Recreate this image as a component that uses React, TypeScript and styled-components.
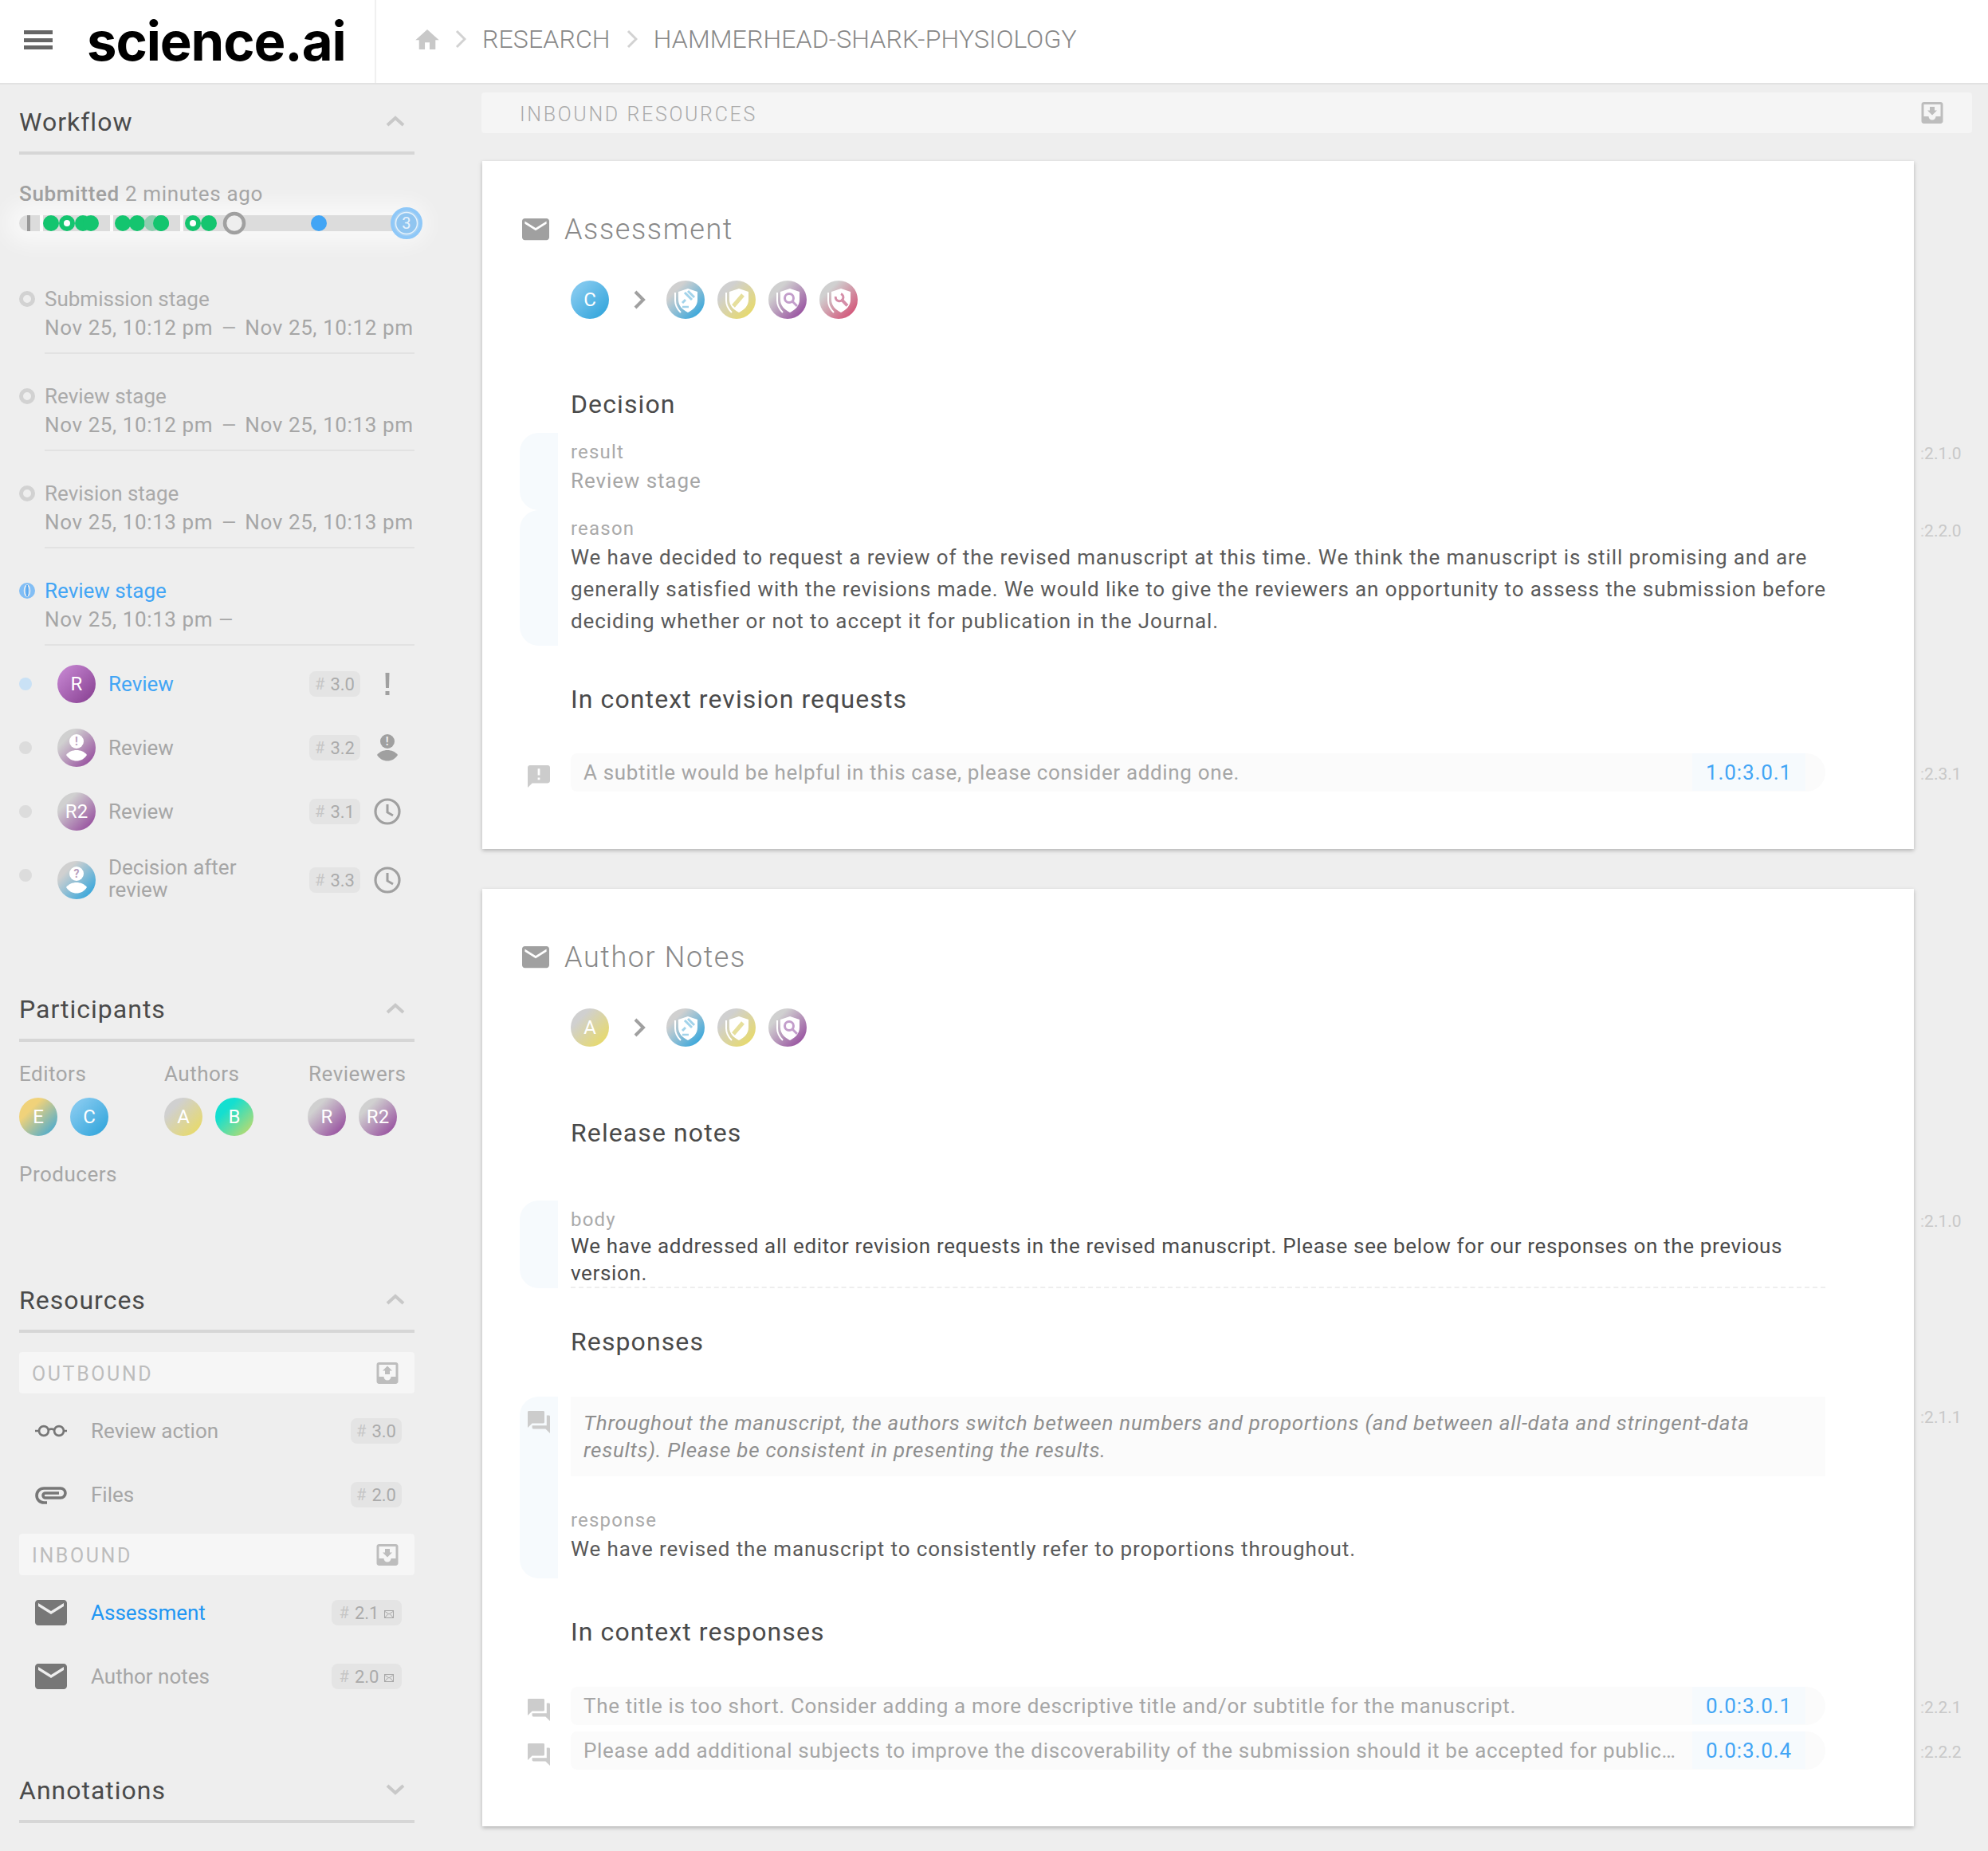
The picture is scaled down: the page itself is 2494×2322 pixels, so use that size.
import React from 'react';
import styled, { createGlobalStyle } from 'styled-components';

const GlobalStyle = createGlobalStyle`
  html, body {
    margin: 0;
    padding: 0;
    background: #eee;
    font-family: Roboto, "Liberation Sans", sans-serif;
  }
  * {
    box-sizing: border-box;
  }
`;

const gradients = {
  reviewActive: 'linear-gradient(135deg, #c080cc 15%, #8c4596 90%)',
  review: 'linear-gradient(135deg, #d0d0d0 25%, #974f9f 90%)',
  decision: 'linear-gradient(135deg, #d0d0d0 25%, #34a6dc 90%)',
  editor: 'linear-gradient(135deg, #f0d27a 30%, #3fa8d6 95%)',
  coEditor: 'linear-gradient(135deg, #7fc7ee 20%, #34a6dc 90%)',
  author: 'linear-gradient(135deg, #d0d0d0 25%, #e8da68 90%)',
  coAuthor: 'linear-gradient(135deg, #14dfd0 30%, #c5da68 95%)',
  producer: 'linear-gradient(135deg, #d0d0d0 25%, #d4486f 95%)',
};

function Chevron({ dir = 'up' }: { dir?: 'up' | 'down' }) {
  return (
    <ChevronSvg viewBox="0 0 24 14" width="24" height="14">
      <polyline points={dir === 'up' ? '2,12 12,3 22,12' : '2,2 12,11 22,2'} fill="none" stroke="#c8c8c8" strokeWidth="4" />
    </ChevronSvg>
  );
}

function Crumb() {
  return (
    <svg viewBox="0 0 14 24" width="14" height="24">
      <polyline points="2,2 12,12 2,22" fill="none" stroke="#d2d2d2" strokeWidth="3" />
    </svg>
  );
}

function Mail({ size = 40, color = '#777' }: { size?: number; color?: string }) {
  return (
    <svg viewBox="2 4 20 16" width={size} height={size * 0.8}>
      <path fill={color} d="M20 4H4c-1.1 0-2 .9-2 2v12c0 1.1.9 2 2 2h16c1.1 0 2-.9 2-2V6c0-1.1-.9-2-2-2zm0 4l-8 5-8-5V6l8 5 8-5v2z" />
    </svg>
  );
}

function TrayIcon({ out }: { out?: boolean }) {
  const arrow = out ? 'M8 10h2v3h4v-3h2l-4-4-4 4z' : 'M16 10h-2V7h-4v3H8l4 4 4-4z';
  return (
    <svg viewBox="3 3 18 18" width="28" height="27">
      <path fill="#bdbdbd" d={`M19 3H4.99c-1.11 0-1.98.89-1.98 2L3 19c0 1.1.88 2 1.99 2H19c1.1 0 2-.9 2-2V5c0-1.11-.9-2-2-2zm0 12h-4c0 1.66-1.35 3-3 3s-3-1.34-3-3H4.99V5H19v10z${arrow}`} />
    </svg>
  );
}

function Note({ kind }: { kind: 'alert' | 'answer' }) {
  const d =
    kind === 'alert'
      ? 'M20 2H4c-1.1 0-1.99.9-1.99 2L2 22l4-4h14c1.1 0 2-.9 2-2V4c0-1.1-.9-2-2-2zm-7 9h-2V5h2v6zm0 4h-2v-2h2v2z'
      : 'M21 6h-2v9H6v2c0 .55.45 1 1 1h11l4 4V7c0-.55-.45-1-1-1zm-4 6V3c0-.55-.45-1-1-1H3c-.55 0-1 .45-1 1v14l4-4h10c.55 0 1-.45 1-1z';
  return (
    <NoteSvg viewBox="2 2 20 20" width="28" height="28">
      <path fill="#cccccc" d={d} />
    </NoteSvg>
  );
}

function Person({ mark, color, width, height }: { mark: string; color: string; width: number; height: number }) {
  const markColor = color === '#fff' ? '#b9a0bd' : '#eee';
  return (
    <svg viewBox="0 0 28 34" width={width} height={height}>
      <circle cx="14" cy="9" r="9" fill={color} />
      <text x="14" y="14" textAnchor="middle" fontSize="14" fontWeight="700" fill={markColor} fontFamily="Roboto, sans-serif">
        {mark}
      </text>
      <path d="M1 26C7 18 21 18 27 26 21 36 7 36 1 26z" fill={color} />
    </svg>
  );
}

function Clock() {
  return (
    <svg viewBox="0 0 34 34" width="34" height="34">
      <circle cx="17" cy="17" r="15" fill="none" stroke="#a0a0a0" strokeWidth="3.2" />
      <polyline points="17,8 17,18 24,22" fill="none" stroke="#a0a0a0" strokeWidth="3" />
    </svg>
  );
}

function Bang() {
  return (
    <svg viewBox="0 0 8 28" width="8" height="28">
      <path d="M1.5 0h5L6 19H2z" fill="#a0a0a0" />
      <rect x="1.5" y="23" width="5" height="5" fill="#a0a0a0" />
    </svg>
  );
}

function Glasses() {
  return (
    <svg viewBox="0 0 44 16" width="44" height="16">
      <g fill="none" stroke="#777" strokeWidth="3">
        <circle cx="12" cy="8" r="6.5" />
        <circle cx="33" cy="8" r="6.5" />
        <path d="M18.5 6.500c2-1.500 6-1.500 8 0M0 8h5M39 8h5" />
      </g>
    </svg>
  );
}

function Clip() {
  return (
    <svg viewBox="0 0 40 24" width="40" height="24">
      <path d="M15 22H11a9 9 0 0 1 0-18H32a6 6 0 0 1 0 12H13a3 3 0 0 1 0-6H30" fill="none" stroke="#777" strokeWidth="3.6" />
    </svg>
  );
}

function StageDot({ active }: { active?: boolean }) {
  if (!active) return <RingDot />;
  return (
    <StageSvg viewBox="0 0 20 20" width="20" height="20">
      <circle cx="10" cy="10" r="10" fill="#82bef5" />
      <ellipse cx="10" cy="10" rx="3.500" ry="7" fill="none" stroke="#eee" strokeWidth="1.500" />
      <rect x="9" y="3" width="2" height="14" fill="#5aa8ef" />
    </StageSvg>
  );
}

function Timeline() {
  const green = '#14c56f';
  return (
    <TimelineWrap>
      <TimelineSvg viewBox="0 0 496 20" width="496" height="20">
        <path d="M10 0H26V20H10a10 10 0 0 1 0-20z" fill="#dcdcdc" />
        <rect x="30" width="84" height="20" fill="#dcdcdc" />
        <rect x="118" width="84" height="20" fill="#dcdcdc" />
        <rect x="206" width="270" height="20" fill="#dcdcdc" />
        <rect x="10" width="4" height="20" fill="#999" />
        {[40, 60, 80, 90, 130, 148, 178, 218, 238].map((cx) => (
          <circle key={cx} cx={cx} cy="10" r="10" fill={green} />
        ))}
        <circle cx="167" cy="10" r="10" fill="#8fceb0" />
        <circle cx="178" cy="10" r="10" fill={green} />
        <circle cx="60" cy="10" r="4" fill="#fff" />
        <circle cx="218" cy="10" r="4" fill="#fff" />
        <circle cx="270" cy="10" r="12" fill="#eee" stroke="#a0a0a0" strokeWidth="4.500" />
        <circle cx="376" cy="10" r="10" fill="#42a5f5" />
        <circle cx="486" cy="10" r="18" fill="#a5d0f3" stroke="#8fc8f8" strokeWidth="4" />
        <circle cx="486" cy="10" r="13.500" fill="#90c5f0" stroke="#e6f2fb" strokeWidth="1.500" />
        <text x="486" y="17" textAnchor="middle" fontSize="20" fill="#e8f3fc" fontFamily="Roboto, sans-serif">
          3
        </text>
      </TimelineSvg>
    </TimelineWrap>
  );
}

type RoleKind = 'gavel' | 'pencil' | 'search' | 'wrench';

const roleColors: Record<RoleKind, { bg: string; ink: string }> = {
  gavel: { bg: gradients.decision, ink: '#a2d3ea' },
  pencil: { bg: gradients.author, ink: '#e6df9c' },
  search: { bg: gradients.review, ink: '#c39ecb' },
  wrench: { bg: gradients.producer, ink: '#d58ea8' },
};

function Role({ kind }: { kind: RoleKind }) {
  const { bg, ink } = roleColors[kind];
  return (
    <RoleCircle $bg={bg}>
      <svg viewBox="0 0 48 48" width="48" height="48">
        <path d="M27 10l12 4v10c0 8-6 13-12 16-6-3-12-8-12-16V14z" fill="#fff" />
        <path d="M11 15v10c0 6 3 11 7 15" fill="none" stroke="#fff" strokeWidth="2" />
        {kind === 'gavel' && (
          <g stroke={ink} fill="none">
            <path d="M23 15l9 9M27 13l8 8" strokeWidth="3" />
            <path d="M24 24l-4 4" strokeWidth="3" />
            <path d="M20 33h8" strokeWidth="2.500" />
          </g>
        )}
        {kind === 'pencil' && <path d="M20 32l12-14" stroke={ink} strokeWidth="5" fill="none" />}
        {kind === 'search' && (
          <g stroke={ink} fill="none" strokeWidth="3">
            <circle cx="26" cy="22" r="5.500" />
            <path d="M30 26l6 6" />
          </g>
        )}
        {kind === 'wrench' && (
          <g stroke={ink} fill="none">
            <path d="M27.500 23.500l7.500 8" strokeWidth="4" />
            <path d="M27 16.600A4.800 4.800 0 1 1 20.400 20" strokeWidth="3" />
          </g>
        )}
      </svg>
    </RoleCircle>
  );
}

function Num({ value, mail }: { value: string; mail?: boolean }) {
  return (
    <Badge $wide={mail}>
      <BadgeHash>#</BadgeHash>
      {value}
      {mail && (
        <MiniMail viewBox="0 0 12 10" width="12" height="10">
          <rect x=".5" y=".5" width="11" height="9" fill="none" stroke="#a8a8a8" />
          <path d="M1 1.500l5 3.500 5-3.500M1 9l3.500-4M11 9L7.500 5" fill="none" stroke="#a8a8a8" />
        </MiniMail>
      )}
    </Badge>
  );
}

function SideRef({ value }: { value: string }) {
  return (
    <SideTag>
      <SideColon>:</SideColon>
      {value}
    </SideTag>
  );
}

function CommentRow({ kind, text, link, tag }: { kind: 'alert' | 'answer'; text: string; link: string; tag: string }) {
  return (
    <RowLine>
      <NoteSlot>
        <Note kind={kind} />
      </NoteSlot>
      <CommentBar>
        <CommentText>{text}</CommentText>
        <CommentLink>{link}</CommentLink>
      </CommentBar>
      <SideRef value={tag} />
    </RowLine>
  );
}

function Stage({ title, start, end, active }: { title: string; start: string; end?: string; active?: boolean }) {
  return (
    <StageRow>
      <StageDot active={active} />
      <StageText>
        <StageTitle $active={active}>{title}</StageTitle>
        <StageDates>
          {start} <StageDash $open={!end}>—</StageDash> {end}
        </StageDates>
      </StageText>
    </StageRow>
  );
}

function Phase({
  active,
  bg,
  initial,
  mark,
  label,
  num,
  status,
  tall,
}: {
  active?: boolean;
  bg: string;
  initial?: string;
  mark?: string;
  label: string;
  num: string;
  status: React.ReactNode;
  tall?: boolean;
}) {
  return (
    <PhaseRow $tall={tall}>
      <PhaseDot $active={active} $tall={tall} />
      <PhaseAvatar $bg={bg}>{mark ? <Person mark={mark} color="#fff" width={28} height={34} /> : initial}</PhaseAvatar>
      <PhaseLabel $active={active} $tall={tall}>
        {label}
      </PhaseLabel>
      <Num value={num} />
      <StatusSlot>{status}</StatusSlot>
    </PhaseRow>
  );
}

function ResourceItem({ icon, label, num, active, mail }: { icon: React.ReactNode; label: string; num: string; active?: boolean; mail?: boolean }) {
  return (
    <ResourceRow>
      <ResourceIcon>{icon}</ResourceIcon>
      <ResourceLabel $active={active}>{label}</ResourceLabel>
      <Num value={num} mail={mail} />
    </ResourceRow>
  );
}

export default function App() {
  return (
    <>
      <GlobalStyle />
      <Page>
        <TopBar>
          <Brand>
            <Burger>
              <i />
              <i />
              <i />
            </Burger>
            <Logo>science.ai</Logo>
          </Brand>
          <Breadcrumbs>
            <svg viewBox="2 3 20 17" width="30" height="25">
              <path fill="#c8c8c8" d="M10 20v-6h4v6h5v-8h3L12 3 2 12h3v8z" />
            </svg>
            <Crumb />
            <CrumbText>RESEARCH</CrumbText>
            <Crumb />
            <CrumbText>HAMMERHEAD-SHARK-PHYSIOLOGY</CrumbText>
          </Breadcrumbs>
        </TopBar>
        <Layout>
          <Sidebar>
            <SectionHead>
              <SectionTitle>Workflow</SectionTitle>
              <Chevron />
            </SectionHead>
            <Submitted>
              <b>Submitted</b> 2 minutes ago
            </Submitted>
            <Timeline />
            <Stages>
              <Stage title="Submission stage" start="Nov 25, 10:12 pm" end="Nov 25, 10:12 pm" />
              <Stage title="Review stage" start="Nov 25, 10:12 pm" end="Nov 25, 10:13 pm" />
              <Stage title="Revision stage" start="Nov 25, 10:13 pm" end="Nov 25, 10:13 pm" />
              <Stage title="Review stage" start="Nov 25, 10:13 pm" active />
            </Stages>
            <Phases>
              <Phase active bg={gradients.reviewActive} initial="R" label="Review" num="3.0" status={<Bang />} />
              <Phase bg={gradients.review} mark="!" label="Review" num="3.2" status={<Person mark="!" color="#a0a0a0" width={28} height={34} />} />
              <Phase bg={gradients.review} initial="R2" label="Review" num="3.1" status={<Clock />} />
              <Phase tall bg={gradients.decision} mark="?" label="Decision after review" num="3.3" status={<Clock />} />
            </Phases>

            <SectionHead $gap={69}>
              <SectionTitle>Participants</SectionTitle>
              <Chevron />
            </SectionHead>
            <PeopleGrid>
              <div>
                <PeopleLabel>Editors</PeopleLabel>
                <PeopleRow>
                  <PersonCircle $bg={gradients.editor}>E</PersonCircle>
                  <PersonCircle $bg={gradients.coEditor}>C</PersonCircle>
                </PeopleRow>
              </div>
              <div>
                <PeopleLabel>Authors</PeopleLabel>
                <PeopleRow>
                  <PersonCircle $bg={gradients.author}>A</PersonCircle>
                  <PersonCircle $bg={gradients.coAuthor}>B</PersonCircle>
                </PeopleRow>
              </div>
              <div>
                <PeopleLabel $pull>Reviewers</PeopleLabel>
                <PeopleRow $pull>
                  <PersonCircle $bg={gradients.review}>R</PersonCircle>
                  <PersonCircle $bg={gradients.review}>R2</PersonCircle>
                </PeopleRow>
              </div>
              <div>
                <PeopleLabel>Producers</PeopleLabel>
              </div>
            </PeopleGrid>

            <SectionHead $gap={93}>
              <SectionTitle>Resources</SectionTitle>
              <Chevron />
            </SectionHead>
            <BoundBar $first>
              OUTBOUND
              <TrayIcon out />
            </BoundBar>
            <ResourceItem icon={<Glasses />} label="Review action" num="3.0" />
            <ResourceItem icon={<Clip />} label="Files" num="2.0" />
            <BoundBar>
              INBOUND
              <TrayIcon />
            </BoundBar>
            <ResourceItem icon={<Mail />} label="Assessment" num="2.1" active mail />
            <ResourceItem icon={<Mail />} label="Author notes" num="2.0" mail />

            <SectionHead $gap={56}>
              <SectionTitle>Annotations</SectionTitle>
              <Chevron dir="down" />
            </SectionHead>
          </Sidebar>

          <Main>
            <InboundBar>
              <span>INBOUND RESOURCES</span>
              <TrayIcon />
            </InboundBar>

            <Card>
              <CardHead>
                <Mail size={34} color="#a0a0a0" />
                <CardTitle>Assessment</CardTitle>
              </CardHead>
              <Audience>
                <PersonCircle $bg={gradients.coEditor}>C</PersonCircle>
                <AudienceArrow viewBox="0 0 16 24" width="16" height="24">
                  <polyline points="3,2 13,12 3,22" fill="none" stroke="#a0a0a0" strokeWidth="4" />
                </AudienceArrow>
                <Role kind="gavel" />
                <Role kind="pencil" />
                <Role kind="search" />
                <Role kind="wrench" />
              </Audience>
              <Heading $top={85}>Decision</Heading>
              <FieldBlock $top={14}>
                <Tab />
                <FieldBody $pad="8px 0 17px">
                  <FieldKey>result</FieldKey>
                  <FieldValue $muted>Review stage</FieldValue>
                </FieldBody>
                <SideRef value="2.1.0" />
              </FieldBlock>
              <FieldBlock>
                <Tab />
                <FieldBody $pad="7px 0 11px">
                  <FieldKey>reason</FieldKey>
                  <FieldValue>
                    We have decided to request a review of the revised manuscript at this time. We think the manuscript is still promising and are generally satisfied with the revisions made. We would like to give the reviewers an opportunity to assess the submission before deciding whether or not to accept it for publication in the Journal.
                  </FieldValue>
                </FieldBody>
                <SideRef value="2.2.0" />
              </FieldBlock>
              <Heading $top={45}>In context revision requests</Heading>
              <Comments $top={46}>
                <CommentRow kind="alert" text="A subtitle would be helpful in this case, please consider adding one." link="1.0:3.0.1" tag="2.3.1" />
              </Comments>
            </Card>

            <Card $second>
              <CardHead>
                <Mail size={34} color="#a0a0a0" />
                <CardTitle>Author Notes</CardTitle>
              </CardHead>
              <Audience>
                <PersonCircle $bg={gradients.author}>A</PersonCircle>
                <AudienceArrow viewBox="0 0 16 24" width="16" height="24">
                  <polyline points="3,2 13,12 3,22" fill="none" stroke="#a0a0a0" strokeWidth="4" />
                </AudienceArrow>
                <Role kind="gavel" />
                <Role kind="pencil" />
                <Role kind="search" />
              </Audience>
              <Heading $top={86}>Release notes</Heading>
              <FieldBlock $top={63}>
                <Tab />
                <FieldBody $pad="8px 0 0" $dashed>
                  <FieldKey>body</FieldKey>
                  <FieldValue $tight>
                    We have addressed all editor revision requests in the revised manuscript. Please see below for our responses on the previous version.
                  </FieldValue>
                </FieldBody>
                <SideRef value="2.1.0" />
              </FieldBlock>
              <Heading $top={45}>Responses</Heading>
              <FieldBlock $top={47}>
                <Tab>
                  <Note kind="answer" />
                </Tab>
                <FieldBody $pad="0 0 17px">
                  <Quote>
                    Throughout the manuscript, the authors switch between numbers and proportions (and between all-data and stringent-data results). Please be consistent in presenting the results.
                  </Quote>
                  <FieldKey $top={39}>response</FieldKey>
                  <FieldValue>We have revised the manuscript to consistently refer to proportions throughout.</FieldValue>
                </FieldBody>
                <SideRef value="2.1.1" />
              </FieldBlock>
              <Heading $top={45}>In context responses</Heading>
              <Comments $top={47}>
                <CommentRow kind="answer" text="The title is too short. Consider adding a more descriptive title and/or subtitle for the manuscript." link="0.0:3.0.1" tag="2.2.1" />
                <CommentRow kind="answer" text="Please add additional subjects to improve the discoverability of the submission should it be accepted for publication in the Journal." link="0.0:3.0.4" tag="2.2.2" />
              </Comments>
            </Card>
          </Main>
        </Layout>
      </Page>
    </>
  );
}

const Page = styled.div`
  width: 2494px;
  height: 2322px;
  overflow: hidden;
  background: #eee;
  letter-spacing: 0.5px;
`;
const TopBar = styled.header`
  display: flex;
  height: 106px;
  background: #fff;
  border-bottom: 2px solid #e2e2e2;
`;
const Brand = styled.div`
  display: flex;
  align-items: center;
  width: 472px;
  padding-left: 30px;
  border-right: 2px solid #f0f0f0;
`;
const Burger = styled.div`
  display: flex;
  flex-direction: column;
  gap: 4.500px;
  width: 36px;
  margin-top: -4px;
  i {
    display: block;
    height: 5px;
    background: #666;
  }
`;
const Logo = styled.div`
  margin-left: 43px;
  margin-top: -2px;
  font-family: Inter, Roboto, sans-serif;
  font-weight: 700;
  font-size: 67px;
  letter-spacing: -1.1px;
  color: #000;
`;
const Breadcrumbs = styled.nav`
  display: flex;
  align-items: center;
  gap: 20px;
  padding-left: 49px;
  margin-top: -6px;
`;
const CrumbText = styled.span`
  font-size: 32px;
  font-weight: 300;
  letter-spacing: 0.15px;
  color: #888;
`;
const Layout = styled.div`
  display: flex;
`;
const Sidebar = styled.aside`
  flex: none;
  width: 604px;
  padding: 0 84px 0 24px;
`;
const SectionHead = styled.div<{ $gap?: number }>`
  display: flex;
  align-items: center;
  justify-content: space-between;
  height: 88px;
  margin-top: ${({ $gap }) => $gap ?? 0}px;
  padding: 8px 12px 0 0;
  border-bottom: 4px solid #d6d6d6;
`;
const SectionTitle = styled.h2`
  margin: 2px 0 0;
  font-size: 32px;
  font-weight: 400;
  letter-spacing: 1px;
  color: #4a4a4a;
`;
const ChevronSvg = styled.svg`
  flex: none;
`;
const Submitted = styled.div`
  margin-top: 31px;
  font-size: 26px;
  line-height: 36px;
  letter-spacing: 0.65px;
  color: #a6a6a6;
  b {
    font-weight: 500;
    color: #a0a0a0;
  }
`;
const TimelineWrap = styled.div`
  height: 20px;
  width: 496px;
  margin-top: 9px;
  border-radius: 10px;
  box-shadow: 0 0 26px 16px rgba(255, 255, 255, 0.6);
  background: rgba(255, 255, 255, 0.85);
`;
const TimelineSvg = styled.svg`
  display: block;
  overflow: visible;
`;
const Stages = styled.div`
  display: flex;
  flex-direction: column;
  gap: 35px;
  margin-top: 67px;
`;
const StageRow = styled.div`
  display: flex;
  gap: 12px;
`;
const RingDot = styled.span`
  flex: none;
  width: 20px;
  height: 20px;
  margin-top: 8px;
  border: 5px solid #d2d2d2;
  border-radius: 50%;
`;
const StageSvg = styled.svg`
  flex: none;
  margin-top: 8px;
`;
const StageText = styled.div`
  flex: 1;
  padding-bottom: 13px;
  border-bottom: 2px solid #e2e2e2;
  font-size: 26px;
  line-height: 36px;
`;
const StageTitle = styled.div<{ $active?: boolean }>`
  letter-spacing: 0;
  color: ${({ $active }) => ($active ? '#42a5f5' : '#aaaaaa')};
`;
const StageDates = styled.div`
  letter-spacing: 0.6px;
  color: #a6a6a6;
  white-space: nowrap;
`;
const StageDash = styled.span<{ $open?: boolean }>`
  margin: 0 ${({ $open }) => ($open ? '0' : '4px')};
  font-size: 23px;
  line-height: 0;
  letter-spacing: 0;
`;
const Phases = styled.div`
  margin-top: 8px;
`;
const PhaseRow = styled.div<{ $tall?: boolean }>`
  display: flex;
  align-items: center;
  height: ${({ $tall }) => ($tall ? 92 : 80)}px;
`;
const PhaseDot = styled.span<{ $active?: boolean; $tall?: boolean }>`
  flex: none;
  width: 16px;
  height: 16px;
  margin-top: ${({ $tall }) => ($tall ? -12 : 0)}px;
  border-radius: 50%;
  background: ${({ $active }) => ($active ? '#c9e1f5' : '#dcdcdc')};
`;
const Circle = styled.span<{ $bg: string }>`
  flex: none;
  display: flex;
  align-items: center;
  justify-content: center;
  width: 48px;
  height: 48px;
  border-radius: 50%;
  background: ${({ $bg }) => $bg};
  color: #fff;
  font-size: 24px;
  letter-spacing: 0;
`;
const PhaseAvatar = styled(Circle)`
  margin-left: 32px;
`;
const PersonCircle = styled(Circle)``;
const RoleCircle = styled(Circle)`
  svg {
    display: block;
  }
`;
const PhaseLabel = styled.div<{ $active?: boolean; $tall?: boolean }>`
  flex: 1;
  margin-top: ${({ $tall }) => ($tall ? -5 : 0)}px;
  margin-left: 16px;
  padding-right: 60px;
  font-size: 26px;
  line-height: 28px;
  letter-spacing: 0;
  color: ${({ $active }) => ($active ? '#42a5f5' : '#a6a6a6')};
`;
const Badge = styled.span<{ $wide?: boolean }>`
  flex: none;
  display: inline-flex;
  align-items: center;
  justify-content: center;
  width: ${({ $wide }) => ($wide ? 88 : 64)}px;
  height: 32px;
  border-radius: 8px;
  background: #e4e4e4;
  font-size: 22px;
  letter-spacing: 0;
  color: #ababab;
`;
const BadgeHash = styled.span`
  margin-right: 7px;
  font-size: 20px;
  color: #c6c6c6;
`;
const MiniMail = styled.svg`
  margin-left: 7px;
  margin-top: 3px;
`;
const StatusSlot = styled.span`
  flex: none;
  display: flex;
  justify-content: center;
  width: 68px;
`;
const PeopleGrid = styled.div`
  display: grid;
  grid-template-columns: 182px 182px 1fr;
  row-gap: 30px;
  margin-top: 22px;
`;
const PeopleLabel = styled.div<{ $pull?: boolean }>`
  margin-left: ${({ $pull }) => ($pull ? -1 : 0)}px;
  font-size: 26px;
  line-height: 36px;
  color: #a6a6a6;
`;
const PeopleRow = styled.div<{ $pull?: boolean }>`
  display: flex;
  gap: 16px;
  margin: 12px 0 0 ${({ $pull }) => ($pull ? -2 : 0)}px;
`;
const BoundBar = styled.div<{ $first?: boolean }>`
  display: flex;
  align-items: center;
  justify-content: space-between;
  height: 52px;
  margin: ${({ $first }) => ($first ? 24 : 9)}px 0 7px;
  padding: 2px 20px 0 16px;
  border-radius: 4px;
  background: #f6f6f6;
  font-size: 25px;
  letter-spacing: 2.6px;
  color: #bdbdbd;
  svg {
    margin-top: -2px;
  }
`;
const ResourceRow = styled.div`
  display: flex;
  align-items: center;
  height: 80px;
  padding: 0 16px 0 20px;
`;
const ResourceIcon = styled.span`
  flex: none;
  display: flex;
  justify-content: center;
  width: 40px;
`;
const ResourceLabel = styled.span<{ $active?: boolean }>`
  flex: 1;
  margin-left: 30px;
  font-size: 26px;
  letter-spacing: 0;
  color: ${({ $active }) => ($active ? '#2196f3' : '#a6a6a6')};
`;
const Main = styled.main`
  flex: 1;
  padding: 10px 20px 0 0;
`;
const InboundBar = styled.div`
  display: flex;
  align-items: center;
  justify-content: space-between;
  height: 51px;
  padding: 0 36px 0 48px;
  border-radius: 4px;
  background: #f5f5f5;
  font-size: 25px;
  font-weight: 300;
  letter-spacing: 2.65px;
  color: #aaa;
  span {
    margin-top: 3px;
  }
`;
const Card = styled.section<{ $second?: boolean }>`
  width: 1796px;
  margin: ${({ $second }) => ($second ? 50 : 35)}px 0 0 1px;
  padding: 64px 111px ${({ $second }) => ($second ? 71 : 72)}px 0;
  background: #fff;
  box-shadow: 0 2px 5px rgba(0, 0, 0, 0.25);
`;
const CardHead = styled.div`
  display: flex;
  align-items: center;
  gap: 19px;
  height: 44px;
  padding-left: 50px;
`;
const CardTitle = styled.h2`
  margin: 0;
  font-size: 36px;
  font-weight: 300;
  letter-spacing: 1.600px;
  color: #888;
`;
const Audience = styled.div`
  display: flex;
  align-items: center;
  gap: 16px;
  margin-top: 42px;
  padding-left: 111px;
`;
const AudienceArrow = styled.svg`
  margin: 0 10px 0 14px;
`;
const Heading = styled.h3<{ $top: number }>`
  margin: ${({ $top }) => $top}px 0 0 111px;
  font-size: 32px;
  line-height: 44px;
  font-weight: 400;
  letter-spacing: 1.1px;
  color: #4a4a4a;
`;
const FieldBlock = styled.div<{ $top?: number }>`
  position: relative;
  display: flex;
  margin: ${({ $top }) => $top ?? 0}px 0 0 47px;
`;
const Tab = styled.div`
  flex: none;
  width: 48px;
  margin-right: 16px;
  padding: 18px 0 0 10px;
  border-radius: 24px 0 0 24px;
  background: #f6fafd;
`;
const FieldBody = styled.div<{ $pad: string; $dashed?: boolean }>`
  flex: 1;
  min-width: 0;
  padding: ${({ $pad }) => $pad};
  border-bottom: ${({ $dashed }) => ($dashed ? '2px dashed #eee' : 'none')};
`;
const FieldKey = styled.div<{ $top?: number }>`
  margin-top: ${({ $top }) => $top ?? 0}px;
  font-size: 24px;
  line-height: 32px;
  letter-spacing: 1.2px;
  color: #aaaaaa;
`;
const FieldValue = styled.div<{ $muted?: boolean; $tight?: boolean }>`
  margin-right: ${({ $tight }) => ($tight ? 0 : -8)}px;
  font-size: 26px;
  line-height: ${({ $tight }) => ($tight ? 34 : 40)}px;
  letter-spacing: ${({ $tight }) => ($tight ? 0.65 : 0.9)}px;
  color: ${({ $muted, $tight }) => ($muted ? '#a6a6a6' : $tight ? '#4a4a4a' : '#5a5a5a')};
`;
const Quote = styled.div`
  padding: 16px;
  background: #fbfbfb;
  font-size: 26px;
  font-style: italic;
  line-height: 34px;
  letter-spacing: 0.74px;
  color: #8e8e8e;
`;
const Comments = styled.div<{ $top: number }>`
  display: flex;
  flex-direction: column;
  gap: 8px;
  margin: ${({ $top }) => $top}px 0 0 47px;
`;
const RowLine = styled.div`
  position: relative;
  display: flex;
`;
const NoteSlot = styled.div`
  flex: none;
  width: 64px;
  padding: 15px 0 0 10px;
`;
const NoteSvg = styled.svg`
  display: block;
`;
const CommentBar = styled.div`
  flex: 1;
  min-width: 0;
  display: flex;
  align-items: center;
  height: 48px;
  padding: 0 25px 0 16px;
  border-radius: 8px 24px 24px 8px;
  background: #fbfbfb;
`;
const CommentText = styled.div`
  flex: 1;
  min-width: 0;
  padding-right: 16px;
  white-space: nowrap;
  overflow: hidden;
  text-overflow: ellipsis;
  font-size: 26px;
  letter-spacing: 0.65px;
  color: #a6a6a6;
`;
const CommentLink = styled.div`
  flex: none;
  display: flex;
  align-items: center;
  justify-content: center;
  width: 142px;
  height: 47px;
  align-self: flex-start;
  background: #f6fafd;
  font-size: 26px;
  letter-spacing: 0.9px;
  color: #42a5f5;
`;
const SideTag = styled.span`
  position: absolute;
  left: 1757px;
  top: 14px;
  font-size: 21px;
  line-height: 24px;
  letter-spacing: 0;
  color: #c8c8c8;
  white-space: nowrap;
`;
const SideColon = styled.span`
  opacity: 0.7;
`;
